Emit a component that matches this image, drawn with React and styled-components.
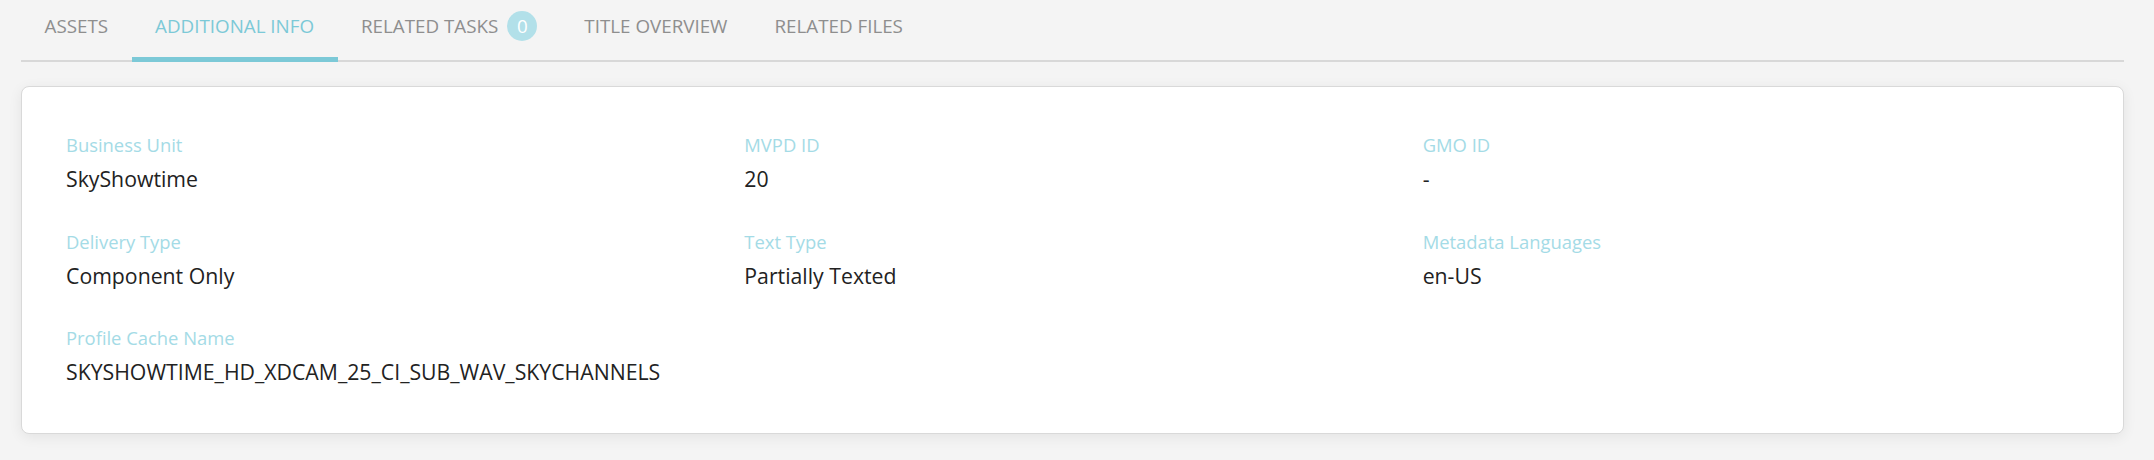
import React from 'react';
import styled, { createGlobalStyle } from 'styled-components';

const GlobalStyle = createGlobalStyle`
    html, body {
        margin: 0;
        padding: 0;
        background-color: #f4f4f4;
        font-family: "Open Sans", "Liberation Sans", sans-serif;
    }
`;

const Page = styled.div`
    padding: 0 30px 26px 21px;
`;

const TabBar = styled.div`
    display: flex;
    align-items: flex-end;
    border-bottom: 2px solid #d8d8d8;
`;

const Tab = styled.div`
    display: flex;
    align-items: center;
    padding: 14px 23.5px 19px;
    margin-bottom: -2px;
    font-size: 18.8px;
    line-height: 24px;
    text-transform: uppercase;
    color: ${props => (props.active ? '#7cc9d7' : '#8e8e8e')};
    border-bottom: 5px solid ${props => (props.active ? '#7cc9d7' : 'transparent')};
    cursor: pointer;
`;

const Badge = styled.span`
    display: inline-flex;
    align-items: center;
    justify-content: center;
    width: 30px;
    height: 30px;
    margin: -3px 0 -3px 9px;
    border-radius: 50%;
    background-color: #b2e0e9;
    color: #ffffff;
    font-size: 18.8px;
`;

const Card = styled.div`
    margin-top: 24px;
    background-color: #ffffff;
    border: 1px solid #d9d9d9;
    border-radius: 8px;
    box-shadow: 0 3px 14px rgba(0, 0, 0, 0.07);
    padding: 44px 22px 45px 44px;
`;

const Grid = styled.div`
    display: grid;
    grid-template-columns: repeat(3, 1fr);
    row-gap: 33px;
`;

const Field = styled.div`
    display: flex;
    flex-direction: column;
    gap: 5px;
`;

const Label = styled.div`
    font-size: 18.4px;
    line-height: 27px;
    color: #a4dbe6;
`;

const Value = styled.div`
    font-size: 21.25px;
    line-height: 31.5px;
    color: #222222;
`;

const tabs = [
    { name: 'Assets' },
    { name: 'Additional Info', active: true },
    { name: 'Related Tasks', count: 0 },
    { name: 'Title Overview' },
    { name: 'Related Files' },
];

const fields = [
    ['Business Unit', 'SkyShowtime'],
    ['MVPD ID', '20'],
    ['GMO ID', '-'],
    ['Delivery Type', 'Component Only'],
    ['Text Type', 'Partially Texted'],
    ['Metadata Languages', 'en-US'],
    ['Profile Cache Name', 'SKYSHOWTIME_HD_XDCAM_25_CI_SUB_WAV_SKYCHANNELS'],
];

function App() {
    return (
        <Page>
            <GlobalStyle />
            <TabBar>
                {tabs.map(t => (
                    <Tab key={t.name} active={t.active}>
                        {t.name}
                        {t.count !== undefined && <Badge>{t.count}</Badge>}
                    </Tab>
                ))}
            </TabBar>
            <Card>
                <Grid>
                    {fields.map(([label, value]) => (
                        <Field key={label}>
                            <Label>{label}</Label>
                            <Value>{value}</Value>
                        </Field>
                    ))}
                </Grid>
            </Card>
        </Page>
    );
}

export default App;
